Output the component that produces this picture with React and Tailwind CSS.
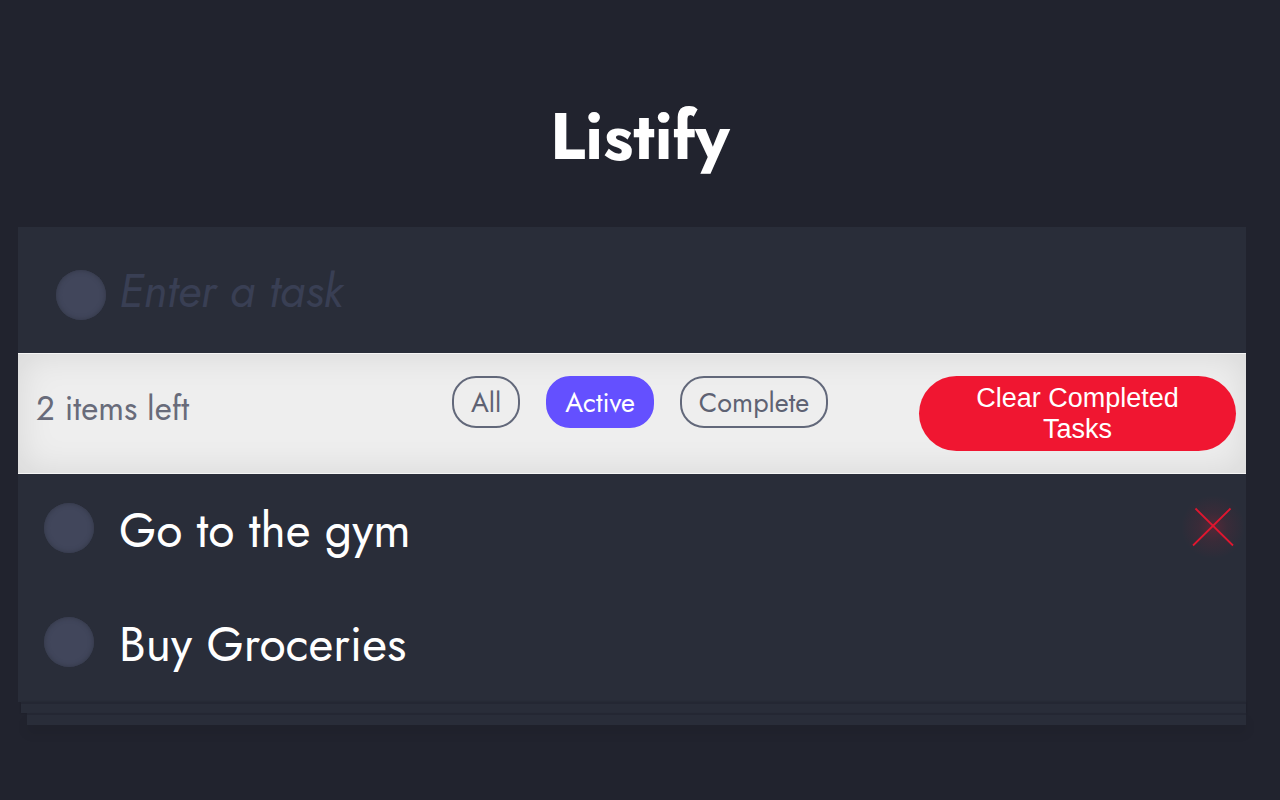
import { useState } from "react";

const initialTasks = [
  { id: 1, label: "Go to the gym", done: false },
  { id: 2, label: "Buy Groceries", done: false },
];

const filters = ["All", "Active", "Complete"];

const circle =
  "size-[50px] shrink-0 cursor-pointer appearance-none rounded-full bg-[#41465b] shadow-[inset_0_0_4px_1px_#363b4c] checked:bg-[#6450ff]";

function TaskRow({ task, removable, onToggle, onRemove }) {
  return (
    <li className="flex h-[114px] items-start pt-[29px] pr-3 pl-[26px]">
      <input
        id={`task-${task.id}`}
        type="checkbox"
        checked={task.done}
        onChange={onToggle}
        className={circle}
      />
      <label htmlFor={`task-${task.id}`} className="ml-[25px] grow text-[48px] leading-14 text-white">
        {task.label}
      </label>
      {removable && (
        <button
          type="button"
          aria-label={`Delete ${task.label}`}
          onClick={onRemove}
          className="mt-1 size-[42px]"
        >
          <svg viewBox="0 0 42 42" className="size-[42px] overflow-visible" fill="none" stroke="#e0162f">
            <defs>
              <radialGradient id="glow">
                <stop offset="0" stopColor="#f01631" stopOpacity="0.22" />
                <stop offset="0.45" stopColor="#f01631" stopOpacity="0.08" />
                <stop offset="1" stopColor="#f01631" stopOpacity="0" />
              </radialGradient>
            </defs>
            <circle cx="21" cy="20" r="32" fill="url(#glow)" stroke="none" />
            <path d="M3.5 1.5 41 38.5M38.5 1.5 1 38.5" strokeWidth="1.8" />
          </svg>
        </button>
      )}
    </li>
  );
}

export default function App() {
  const [tasks, setTasks] = useState(initialTasks);
  const [filter, setFilter] = useState("Active");
  const [draft, setDraft] = useState("");

  const left = tasks.filter((t) => !t.done).length;
  const visible = tasks.filter((t) => filter === "All" || (filter === "Active" ? !t.done : t.done));

  const addTask = (event) => {
    event.preventDefault();
    if (!draft.trim()) return;
    setTasks([...tasks, { id: Date.now(), label: draft.trim(), done: false }]);
    setDraft("");
  };

  return (
    <div className="min-h-screen bg-[#21232e] pt-24 pr-[34px] pb-16 pl-[18px] font-['Jost','Lato',sans-serif]">
      <h1 className="mb-[51px] pl-4 text-center text-[66px] leading-20 font-bold text-white">Listify</h1>
      <main>
        <div className="bg-[#292d39]">
          <form onSubmit={addTask} className="flex h-[126px] items-center pt-2.5 pl-[38px]">
            <input type="checkbox" aria-label="Mark new task complete" className={circle} />
            <input
              type="text"
              aria-label="New task"
              placeholder="Enter a task"
              value={draft}
              onChange={(e) => setDraft(e.target.value)}
              className="mb-2 ml-[13px] min-w-0 grow bg-transparent text-[46px] leading-14 text-white outline-none placeholder:text-[#393f54] placeholder:italic"
            />
          </form>
          <section className="grid h-[121px] grid-cols-[416fr_467fr_317fr] items-start border-y border-[#f5f5f5] bg-[#eeeeee] pt-[22px] pr-[10px] pl-[18px] shadow-[inset_0_0_36px_rgba(0,0,0,0.1)]">
            <p className="mt-[13px] text-[33px] leading-10 text-[#686b7a]">{left} items left</p>
            <div className="flex gap-[26px]">
              {filters.map((name) => (
                <button
                  key={name}
                  type="button"
                  aria-pressed={filter === name}
                  onClick={() => setFilter(name)}
                  className={`h-[52px] rounded-3xl border-2 px-[17px] pt-0.5 text-[27px] leading-8 ${
                    filter === name
                      ? "border-[#6450ff] bg-[#6450ff] text-white"
                      : "border-[#62687a] text-[#5e6273]"
                  }`}
                >
                  {name}
                </button>
              ))}
            </div>
            <button
              type="button"
              onClick={() => setTasks(tasks.filter((t) => !t.done))}
              className="h-[75px] rounded-full bg-[#f01631] px-12 font-['Liberation_Sans',Arial,sans-serif] text-[27px] leading-[31px] text-white"
            >
              Clear Completed Tasks
            </button>
          </section>
          <ul>
            {visible.map((task, i) => (
              <TaskRow
                key={task.id}
                task={task}
                removable={i === 0}
                onToggle={() => setTasks(tasks.map((t) => (t.id === task.id ? { ...t, done: !t.done } : t)))}
                onRemove={() => setTasks(tasks.filter((t) => t.id !== task.id))}
              />
            ))}
          </ul>
        </div>
        <div className="ml-[3px] h-[11px] border-t-2 border-[#242733] bg-[#292d39] shadow-[0_0_2px_rgba(0,0,0,0.2)]" />
        <div className="ml-[9px] h-[12px] border-t-2 border-[#242733] bg-[#292d39] shadow-[0_8px_12px_rgba(0,0,0,0.08)]" />
      </main>
    </div>
  );
}
